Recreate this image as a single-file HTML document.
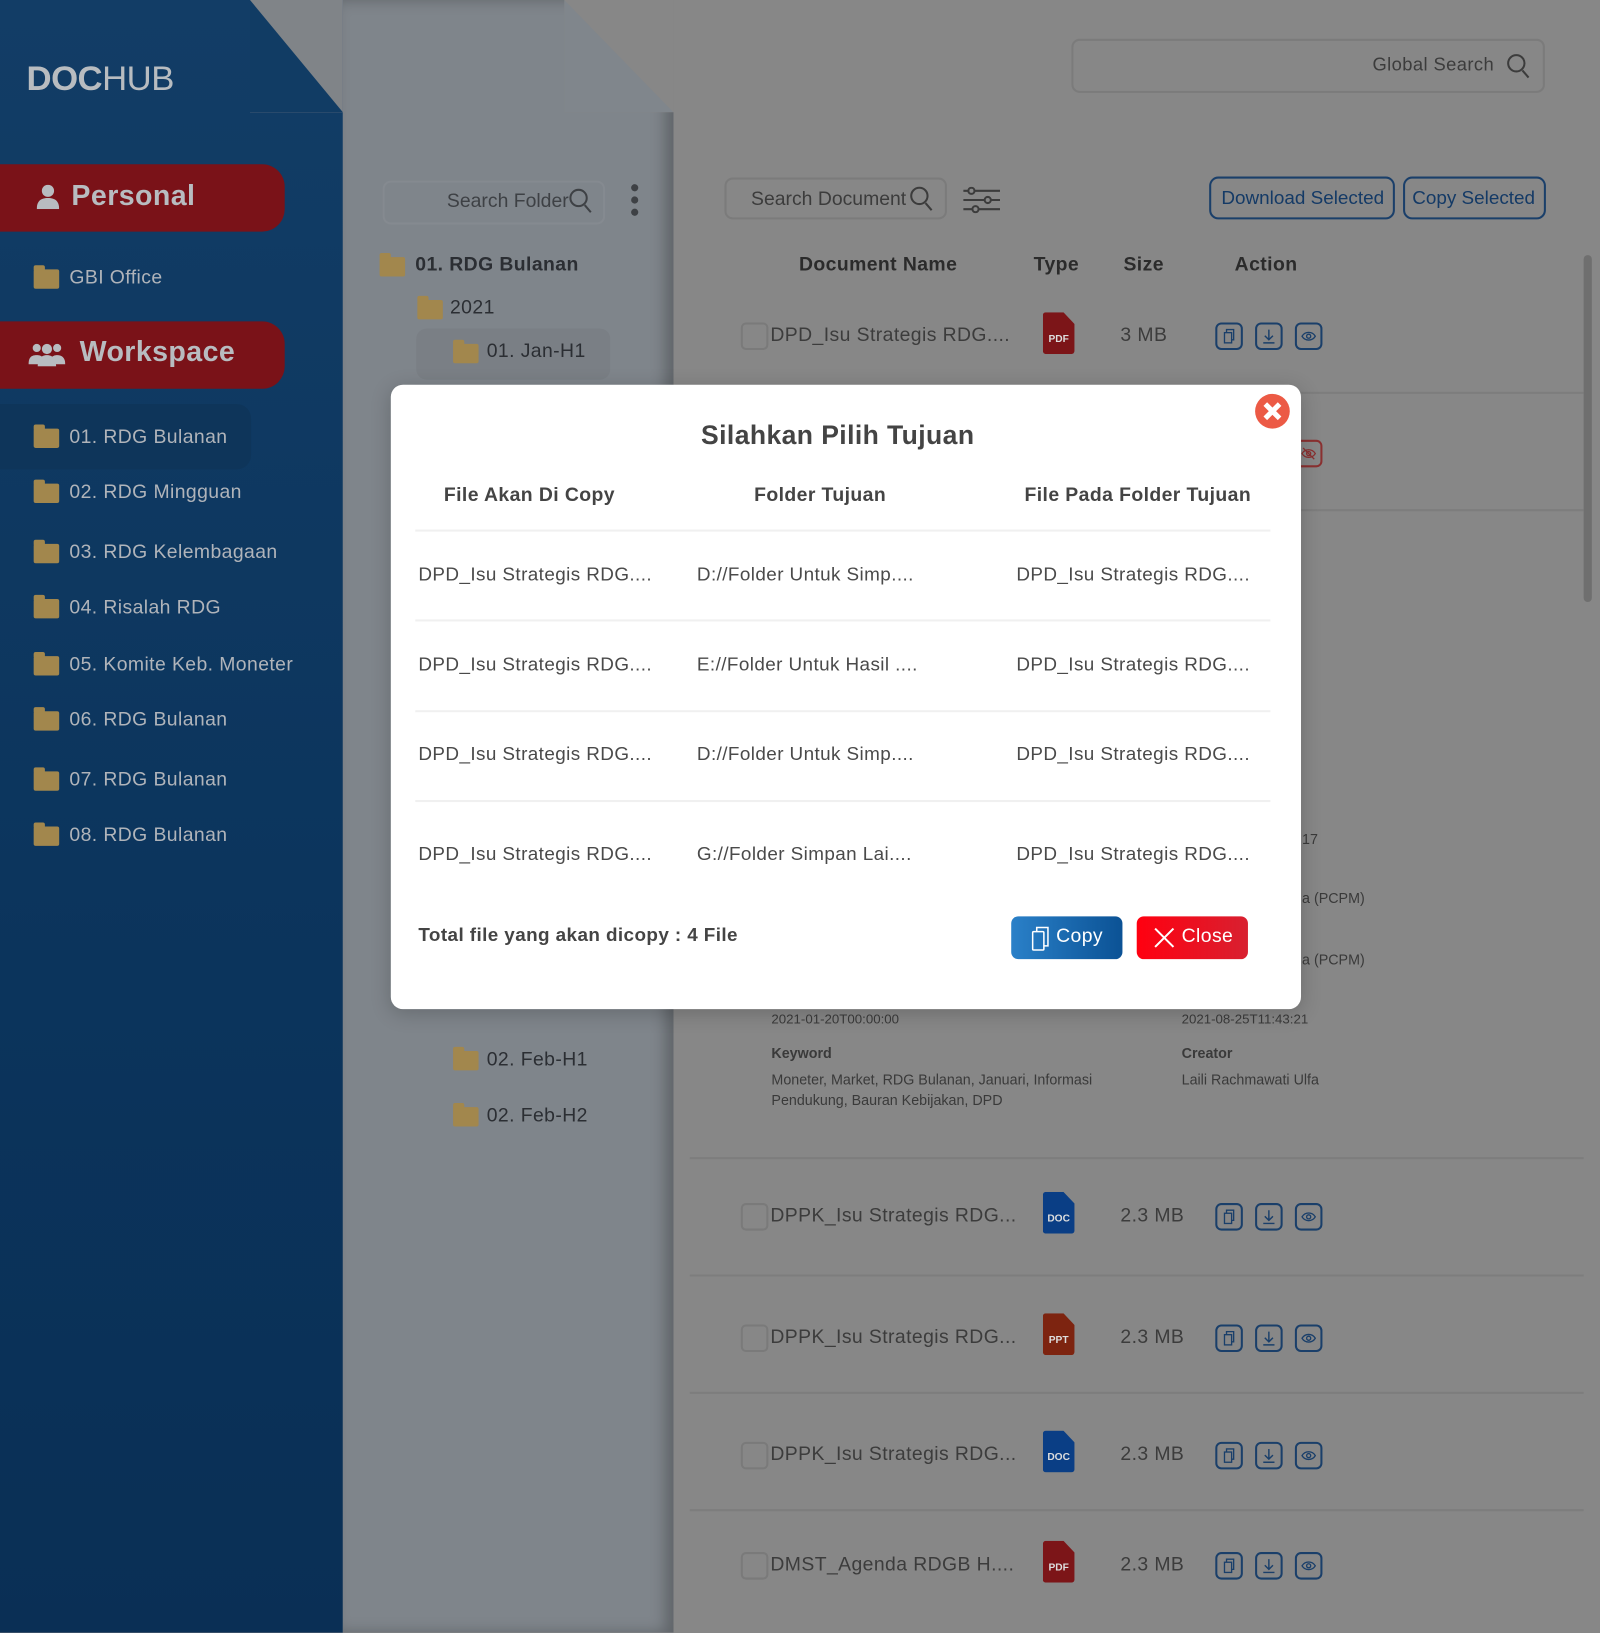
<!DOCTYPE html>
<html><head><meta charset="utf-8"><style>
*{margin:0;padding:0;box-sizing:border-box}
body{width:1600px;height:1600px;position:relative;overflow:hidden;background:#878787;font-family:"Liberation Sans",sans-serif;letter-spacing:.4px}
#w{position:absolute;left:0;top:0;width:1568px;height:1568px;transform:scale(1.0204);transform-origin:0 0}
.a{position:absolute;white-space:nowrap}
.side{position:absolute;left:0;top:0;width:336px;height:1600px;background:linear-gradient(#123d66,#0b345c 60%,#0a2f55)}
.fold1{position:absolute;left:245px;top:0;width:91px;height:110px;background:#808488}
.fold1b{position:absolute;left:245px;top:0;width:91px;height:110px;background:#113c64;clip-path:polygon(0 0,0 100%,100% 100%)}
.fpanel{position:absolute;left:336px;top:0;width:324px;height:1600px;background:#7f858b;box-shadow:-8px 0 14px rgba(0,0,0,.25) inset}
.fold2{position:absolute;left:553px;top:0;width:107px;height:110px;background:#878787}
.fold2b{position:absolute;left:553px;top:0;width:107px;height:110px;background:#80868c;clip-path:polygon(0 0,0 100%,100% 100%)}
.st{color:#b0b4ba;font-size:19px}
.fi{position:absolute;width:25px;height:19px;background:#a2874d;border-radius:2px}
.fi:before{content:"";position:absolute;left:0;top:-4px;width:11px;height:5px;background:#a2874d;border-radius:2px 2px 0 0}
.pill{position:absolute;left:0;width:279px;height:66px;background:#7a1218;border-radius:0 22px 22px 0}
.ft{color:#2b2e33;font-size:19px}
.box{position:absolute;border:2px solid #7b7b7b;border-radius:8px}
.gt{color:#3c3c3c;font-size:19px}
.hdr{color:#2b2b2b;font-size:19px;font-weight:bold}
.sep{position:absolute;left:676px;width:876px;height:2px;background:#7d7d7d}
.cb{position:absolute;left:726px;width:27px;height:27px;border:2px solid #7a7a7a;border-radius:5px}
.ib{position:absolute;width:27px;height:27px;border:2px solid #1a3f6a;border-radius:6px}
.ib svg{position:absolute;left:3px;top:3px}
.file{position:absolute;width:31px;height:41px;border-radius:3px;clip-path:polygon(0 0,65% 0,100% 28%,100% 100%,0 100%);color:#ddd;font-size:10px;font-weight:bold;text-align:center;padding-top:21px;letter-spacing:0}
.modal{position:absolute;left:383px;top:377px;width:892px;height:612px;background:#fff;border-radius:12px;box-shadow:0 4px 20px rgba(0,0,0,.2)}
.mh{color:#444;font-size:19px;font-weight:bold}
.mt{color:#4a4a4a;font-size:18.5px}
.ml{position:absolute;left:24px;width:838px;height:2px;background:#f0f0f0}
.sm{color:#3a3a3a;font-size:14px;letter-spacing:0}
</style></head><body><div id="w">
<div class="side"></div>
<div class="fold1"></div><div class="fold1b"></div>
<div class="a" style="left:26px;top:58px;font-size:34px;color:#b8bcc0;letter-spacing:-.5px"><b>DOC</b>HUB</div>
<div class="pill" style="top:161px"></div>
<svg class="a" style="left:36px;top:181px" width="22" height="24" viewBox="0 0 22 24"><circle cx="11" cy="6" r="6" fill="#b8bcc0"/><path d="M0 24c0-8 4-11 11-11s11 3 11 11z" fill="#b8bcc0"/></svg>
<div class="a" style="left:70px;top:176px;font-size:28px;font-weight:bold;color:#b8bcc0">Personal</div>
<div class="fi" style="left:33px;top:264px"></div><div class="a st" style="left:68px;top:262px">GBI Office</div>
<div class="pill" style="top:315px"></div>
<svg class="a" style="left:28px;top:335px" width="36" height="24" viewBox="0 0 36 24"><circle cx="8" cy="6" r="4" fill="#b8bcc0"/><circle cx="28" cy="6" r="4" fill="#b8bcc0"/><circle cx="18" cy="7" r="5" fill="#b8bcc0"/><path d="M0 22c0-7 3-9 8-9s7 2 7 9zM21 22c0-7 3-9 7-9s8 2 8 9zM9 24c0-8 4-11 9-11s9 3 9 11z" fill="#b8bcc0"/></svg>
<div class="a" style="left:78px;top:329px;font-size:28px;font-weight:bold;color:#b8bcc0">Workspace</div>
<div class="a" style="left:0;top:396px;width:246px;height:64px;background:#0e355a;border-radius:0 14px 14px 0"></div>
<div class="fi" style="left:33px;top:420px"></div><div class="a st" style="left:68px;top:418px">01. RDG Bulanan</div>
<div class="fi" style="left:33px;top:474px"></div><div class="a st" style="left:68px;top:472px">02. RDG Mingguan</div>
<div class="fi" style="left:33px;top:533px"></div><div class="a st" style="left:68px;top:531px">03. RDG Kelembagaan</div>
<div class="fi" style="left:33px;top:587px"></div><div class="a st" style="left:68px;top:585px">04. Risalah RDG</div>
<div class="fi" style="left:33px;top:643px"></div><div class="a st" style="left:68px;top:641px">05. Komite Keb. Moneter</div>
<div class="fi" style="left:33px;top:697px"></div><div class="a st" style="left:68px;top:695px">06. RDG Bulanan</div>
<div class="fi" style="left:33px;top:756px"></div><div class="a st" style="left:68px;top:754px">07. RDG Bulanan</div>
<div class="fi" style="left:33px;top:810px"></div><div class="a st" style="left:68px;top:808px">08. RDG Bulanan</div>

<div class="fpanel"></div>
<div class="fold2"></div><div class="fold2b"></div>
<div class="box" style="left:375px;top:177px;width:218px;height:43px;border-color:#858a90"></div>
<div class="a" style="left:438px;top:187px;font-size:19px;color:#3e4145;letter-spacing:0">Search Folder</div>
<svg class="a" style="left:557px;top:184px" width="24" height="26" viewBox="0 0 24 26" fill="none" stroke="#3e4145" stroke-width="2"><circle cx="10" cy="10" r="8"/><path d="M16 17l6 7"/></svg>
<svg class="a" style="left:617px;top:180px" width="10" height="34"><circle cx="5" cy="4" r="3.5" fill="#3e4145"/><circle cx="5" cy="16" r="3.5" fill="#3e4145"/><circle cx="5" cy="28" r="3.5" fill="#3e4145"/></svg>
<div class="fi" style="left:372px;top:252px"></div><div class="a ft" style="left:407px;top:249px;font-weight:bold">01. RDG Bulanan</div>
<div class="fi" style="left:409px;top:294px"></div><div class="a ft" style="left:441px;top:291px">2021</div>
<div class="a" style="left:408px;top:322px;width:190px;height:50px;background:#7a7f85;border-radius:10px"></div>
<div class="fi" style="left:444px;top:337px"></div><div class="a ft" style="left:477px;top:334px">01. Jan-H1</div>
<div class="fi" style="left:444px;top:1030px"></div><div class="a ft" style="left:477px;top:1028px">02. Feb-H1</div>
<div class="fi" style="left:444px;top:1085px"></div><div class="a ft" style="left:477px;top:1083px">02. Feb-H2</div>

<div class="box" style="left:1050px;top:38px;width:464px;height:53px"></div>
<div class="a gt" style="left:1345px;top:53px;font-size:18px">Global Search</div>
<svg class="a" style="left:1476px;top:52px" width="24" height="26" viewBox="0 0 24 26" fill="none" stroke="#3c3c3c" stroke-width="2"><circle cx="10" cy="10" r="8"/><path d="M16 17l6 7"/></svg>
<div class="box" style="left:710px;top:174px;width:218px;height:41px"></div>
<div class="a gt" style="left:736px;top:185px;letter-spacing:0">Search Document</div>
<svg class="a" style="left:891px;top:182px" width="24" height="26" viewBox="0 0 24 26" fill="none" stroke="#3c3c3c" stroke-width="2"><circle cx="10" cy="10" r="8"/><path d="M16 17l6 7"/></svg>
<svg class="a" style="left:944px;top:183px" width="36" height="26" viewBox="0 0 36 26" fill="none" stroke="#3c3c3c" stroke-width="2"><path d="M0 4h36M0 13h36M0 22h36"/><circle cx="8" cy="4" r="3" fill="#878787"/><circle cx="24" cy="13" r="3" fill="#878787"/><circle cx="12" cy="22" r="3" fill="#878787"/></svg>
<div class="box" style="left:1185px;top:173px;width:182px;height:42px;border-color:#1a3f6a;border-radius:9px"></div>
<div class="a" style="left:1197px;top:183px;font-size:18.5px;color:#143a66;letter-spacing:0">Download Selected</div>
<div class="box" style="left:1375px;top:173px;width:140px;height:42px;border-color:#1a3f6a;border-radius:9px"></div>
<div class="a" style="left:1384px;top:183px;font-size:18.5px;color:#143a66;letter-spacing:0">Copy Selected</div>
<div class="a hdr" style="left:783px;top:249px">Document Name</div>
<div class="a hdr" style="left:1013px;top:249px">Type</div>
<div class="a hdr" style="left:1101px;top:249px">Size</div>
<div class="a hdr" style="left:1210px;top:249px">Action</div>

<div class="sep" style="top:384px"></div><div class="sep" style="top:499px"></div><div class="sep" style="top:1134px"></div><div class="sep" style="top:1249px"></div><div class="sep" style="top:1364px"></div><div class="sep" style="top:1479px"></div>
<div class="a" style="left:1552px;top:250px;width:8px;height:340px;background:#6f6f6f;border-radius:4px"></div>

<div class="cb" style="top:316px"></div><div class="a gt" style="left:755px;top:318px">DPD_Isu Strategis RDG....</div>
<div class="file" style="left:1022px;top:306px;background:#7c1518">PDF</div><div class="a gt" style="left:1098px;top:318px">3 MB</div>
<div id="acts"></div>
<div class="ib" style="left:1191px;top:316px"><svg width="17" height="17" viewBox="0 0 17 17" fill="none" stroke="#1a3f6a" stroke-width="1.3"><rect x="4" y="5" width="7" height="10"/><path d="M6 5V2h7v10h-2"/></svg></div>
<div class="ib" style="left:1230px;top:316px"><svg width="17" height="17" viewBox="0 0 17 17" fill="none" stroke="#1a3f6a" stroke-width="1.4"><path d="M8.5 2v10M4.5 8l4 4 4-4M3 15h11"/></svg></div>
<div class="ib" style="left:1269px;top:316px"><svg width="17" height="17" viewBox="0 0 17 17" fill="none" stroke="#1a3f6a" stroke-width="1.3"><path d="M2 8.5c3-5 10-5 13 0c-3 5-10 5-13 0z"/><circle cx="8.5" cy="8.5" r="2"/></svg></div>
<div class="ib" style="left:1269px;top:431px;border-color:#8a3030"><svg width="17" height="17" viewBox="0 0 17 17" fill="none" stroke="#8a3030" stroke-width="1.3"><path d="M2 8.5c3-5 10-5 13 0c-3 5-10 5-13 0z"/><circle cx="8.5" cy="8.5" r="2"/><path d="M3 3l11 11"/></svg></div>

<div class="a sm" style="left:756px;top:991px;font-size:13px">2021-01-20T00:00:00</div>
<div class="a sm" style="left:1158px;top:991px;font-size:13px">2021-08-25T11:43:21</div>
<div class="a sm" style="left:756px;top:1024px;font-weight:bold">Keyword</div>
<div class="a sm" style="left:1158px;top:1024px;font-weight:bold">Creator</div>
<div class="a sm" style="left:756px;top:1050px">Moneter, Market, RDG Bulanan, Januari, Informasi</div>
<div class="a sm" style="left:756px;top:1070px">Pendukung, Bauran Kebijakan, DPD</div>
<div class="a sm" style="left:1158px;top:1050px">Laili Rachmawati Ulfa</div>
<div class="a sm" style="left:1276px;top:814px">17</div>
<div class="a sm" style="left:1276px;top:872px">a (PCPM)</div>
<div class="a sm" style="left:1276px;top:932px">a (PCPM)</div>

<div class="cb" style="top:1179px"></div><div class="a gt" style="left:755px;top:1181px">DPPK_Isu Strategis RDG...</div>
<div class="file" style="left:1022px;top:1168px;background:#0a3e85">DOC</div><div class="a gt" style="left:1098px;top:1181px">2.3 MB</div>
<div class="cb" style="top:1298px"></div><div class="a gt" style="left:755px;top:1300px">DPPK_Isu Strategis RDG...</div>
<div class="file" style="left:1022px;top:1287px;background:#7d2410">PPT</div><div class="a gt" style="left:1098px;top:1300px">2.3 MB</div>
<div class="cb" style="top:1413px"></div><div class="a gt" style="left:755px;top:1415px">DPPK_Isu Strategis RDG...</div>
<div class="file" style="left:1022px;top:1402px;background:#0a3e85">DOC</div><div class="a gt" style="left:1098px;top:1415px">2.3 MB</div>
<div class="cb" style="top:1521px"></div><div class="a gt" style="left:755px;top:1523px">DMST_Agenda RDGB H....</div>
<div class="file" style="left:1022px;top:1510px;background:#7c1518">PDF</div><div class="a gt" style="left:1098px;top:1523px">2.3 MB</div>

<div class="ib" style="left:1191px;top:1179px"><svg width="17" height="17" viewBox="0 0 17 17" fill="none" stroke="#1a3f6a" stroke-width="1.3"><rect x="4" y="5" width="7" height="10"/><path d="M6 5V2h7v10h-2"/></svg></div>
<div class="ib" style="left:1230px;top:1179px"><svg width="17" height="17" viewBox="0 0 17 17" fill="none" stroke="#1a3f6a" stroke-width="1.4"><path d="M8.5 2v10M4.5 8l4 4 4-4M3 15h11"/></svg></div>
<div class="ib" style="left:1269px;top:1179px"><svg width="17" height="17" viewBox="0 0 17 17" fill="none" stroke="#1a3f6a" stroke-width="1.3"><path d="M2 8.5c3-5 10-5 13 0c-3 5-10 5-13 0z"/><circle cx="8.5" cy="8.5" r="2"/></svg></div>
<div class="ib" style="left:1191px;top:1298px"><svg width="17" height="17" viewBox="0 0 17 17" fill="none" stroke="#1a3f6a" stroke-width="1.3"><rect x="4" y="5" width="7" height="10"/><path d="M6 5V2h7v10h-2"/></svg></div>
<div class="ib" style="left:1230px;top:1298px"><svg width="17" height="17" viewBox="0 0 17 17" fill="none" stroke="#1a3f6a" stroke-width="1.4"><path d="M8.5 2v10M4.5 8l4 4 4-4M3 15h11"/></svg></div>
<div class="ib" style="left:1269px;top:1298px"><svg width="17" height="17" viewBox="0 0 17 17" fill="none" stroke="#1a3f6a" stroke-width="1.3"><path d="M2 8.5c3-5 10-5 13 0c-3 5-10 5-13 0z"/><circle cx="8.5" cy="8.5" r="2"/></svg></div>
<div class="ib" style="left:1191px;top:1413px"><svg width="17" height="17" viewBox="0 0 17 17" fill="none" stroke="#1a3f6a" stroke-width="1.3"><rect x="4" y="5" width="7" height="10"/><path d="M6 5V2h7v10h-2"/></svg></div>
<div class="ib" style="left:1230px;top:1413px"><svg width="17" height="17" viewBox="0 0 17 17" fill="none" stroke="#1a3f6a" stroke-width="1.4"><path d="M8.5 2v10M4.5 8l4 4 4-4M3 15h11"/></svg></div>
<div class="ib" style="left:1269px;top:1413px"><svg width="17" height="17" viewBox="0 0 17 17" fill="none" stroke="#1a3f6a" stroke-width="1.3"><path d="M2 8.5c3-5 10-5 13 0c-3 5-10 5-13 0z"/><circle cx="8.5" cy="8.5" r="2"/></svg></div>
<div class="ib" style="left:1191px;top:1521px"><svg width="17" height="17" viewBox="0 0 17 17" fill="none" stroke="#1a3f6a" stroke-width="1.3"><rect x="4" y="5" width="7" height="10"/><path d="M6 5V2h7v10h-2"/></svg></div>
<div class="ib" style="left:1230px;top:1521px"><svg width="17" height="17" viewBox="0 0 17 17" fill="none" stroke="#1a3f6a" stroke-width="1.4"><path d="M8.5 2v10M4.5 8l4 4 4-4M3 15h11"/></svg></div>
<div class="ib" style="left:1269px;top:1521px"><svg width="17" height="17" viewBox="0 0 17 17" fill="none" stroke="#1a3f6a" stroke-width="1.3"><path d="M2 8.5c3-5 10-5 13 0c-3 5-10 5-13 0z"/><circle cx="8.5" cy="8.5" r="2"/></svg></div>

<div class="modal">
<div class="a" style="left:0;width:876px;top:34px;text-align:center;font-size:26px;font-weight:bold;color:#444">Silahkan Pilih Tujuan</div>
<svg class="a" style="left:846px;top:8px" width="36" height="36" viewBox="0 0 36 36"><circle cx="18" cy="18" r="17" fill="#ec5a45"/><path d="M11 11l14 14M25 11L11 25" stroke="#fff" stroke-width="5"/></svg>
<div class="a mh" style="left:52px;top:98px">File Akan Di Copy</div>
<div class="a mh" style="left:356px;top:98px">Folder Tujuan</div>
<div class="a mh" style="left:621px;top:98px">File Pada Folder Tujuan</div>
<div class="ml" style="top:142px"></div>
<div class="a mt" style="left:27px;top:175px">DPD_Isu Strategis RDG....</div><div class="a mt" style="left:300px;top:175px">D://Folder Untuk Simp....</div><div class="a mt" style="left:613px;top:175px">DPD_Isu Strategis RDG....</div>
<div class="ml" style="top:230px"></div>
<div class="a mt" style="left:27px;top:263px">DPD_Isu Strategis RDG....</div><div class="a mt" style="left:300px;top:263px">E://Folder Untuk Hasil ....</div><div class="a mt" style="left:613px;top:263px">DPD_Isu Strategis RDG....</div>
<div class="ml" style="top:319px"></div>
<div class="a mt" style="left:27px;top:351px">DPD_Isu Strategis RDG....</div><div class="a mt" style="left:300px;top:351px">D://Folder Untuk Simp....</div><div class="a mt" style="left:613px;top:351px">DPD_Isu Strategis RDG....</div>
<div class="ml" style="top:407px"></div>
<div class="a mt" style="left:27px;top:449px">DPD_Isu Strategis RDG....</div><div class="a mt" style="left:300px;top:449px">G://Folder Simpan Lai....</div><div class="a mt" style="left:613px;top:449px">DPD_Isu Strategis RDG....</div>
<div class="a" style="left:27px;top:528px;font-size:18.5px;font-weight:bold;color:#444">Total file yang akan dicopy : 4 File</div>
<div class="a" style="left:608px;top:521px;width:109px;height:42px;border-radius:7px;background:linear-gradient(90deg,#2a80c8,#0b5295)"></div>
<svg class="a" style="left:628px;top:531px" width="18" height="24" viewBox="0 0 18 24" fill="none" stroke="#fff" stroke-width="1.5"><rect x="1" y="5" width="11" height="18" rx="1"/><path d="M5 5V1h11v18h-4"/></svg>
<div class="a" style="left:652px;top:530px;font-size:19px;color:#fff">Copy</div>
<div class="a" style="left:731px;top:521px;width:109px;height:42px;border-radius:7px;background:linear-gradient(90deg,#ff0010,#d82030)"></div>
<svg class="a" style="left:748px;top:532px" width="20" height="20" viewBox="0 0 20 20" stroke="#fff" stroke-width="2"><path d="M1 1l18 18M19 1L1 19"/></svg>
<div class="a" style="left:775px;top:530px;font-size:19px;color:#fff">Close</div>
</div>
</div></body></html>
